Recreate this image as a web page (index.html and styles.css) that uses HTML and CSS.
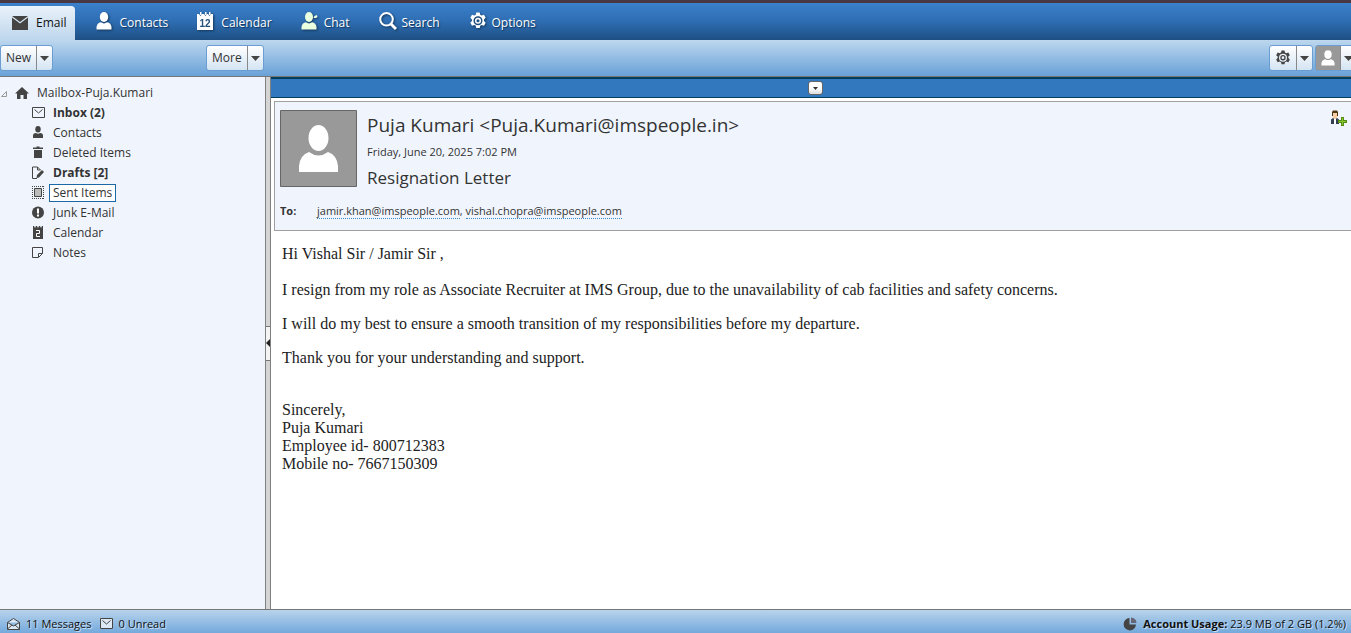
FILE: index.html
```html
<!DOCTYPE html>
<html lang="en">
<head>
<meta charset="utf-8">
<title>Mailbox - Resignation Letter</title>
<link rel="stylesheet" href="styles.css">
</head>
<body>
<svg class="sprite" aria-hidden="true">
  <symbol id="person" viewBox="0 0 16 18"><ellipse cx="8" cy="5" rx="4.2" ry="5"/><path d="M0.500 17.500V15Q1 11 5 10.300Q8 12.500 11 10.300Q15 11 15.500 15V17.500Z"/></symbol>
  <symbol id="gear" viewBox="0 0 18 18"><path fill-rule="evenodd" d="M7.300 0.500h3.400l.5 2.300 1.500.8 2.300-.8 1.700 3-1.700 1.600v1.700l1.700 1.600-1.700 3-2.300-.8-1.500.8-.5 2.300H7.300l-.5-2.300-1.500-.8-2.300.8-1.700-3L3 9.100V7.400L1.300 5.800l1.700-3 2.300.8 1.500-.8ZM9 4.200a4.500 4.500 0 1 0 0 9a4.500 4.500 0 1 0 0-9Z"/><circle cx="9" cy="8.700" r="2.300" fill="none" stroke="currentColor" stroke-width="1.500"/></symbol>
  <symbol id="caret" viewBox="0 0 9 5"><path d="M0 0H9L4.500 5Z"/></symbol>
  <symbol id="letter" viewBox="0 0 13 11"><path fill="none" stroke="currentColor" d="M.5.5h12v10H.5ZM2.500 2.500l4 3.500 4-3.500"/></symbol>
</svg>

<header>
  <nav class="tabs">
    <button class="tab active"><svg class="icon" viewBox="0 0 16 14"><path d="M0 0H16L8 6Z M0 1.500L8 7.500L16 1.500V14H0Z"/></svg>Email</button>
    <button class="tab"><svg class="icon"><use href="#person"/></svg>Contacts</button>
    <button class="tab"><svg class="icon" viewBox="0 0 16 18"><path d="M0 2h2l1.500 2L5 2h2l1.500 2L10 2h1l1.500 2L14 2h2v16H0Z"/><path d="M3 0h1.500v3H3zM8 0h1.500v3H8zM12 0h1.500v3H12z"/><text class="day" x="8" y="15" text-anchor="middle">12</text></svg>Calendar</button>
    <button class="tab chat"><svg class="icon" viewBox="0 0 17 18"><ellipse cx="8" cy="5" rx="4" ry="5"/><path d="M0.500 17.500V15Q1 11 5 10.300Q8 12.500 11 10.300Q15 11 15.500 15V17.500ZM12.500 5.500l1-1.500 2.500-1 .5 2-1.500 1-2 0Z"/></svg>Chat</button>
    <button class="tab"><svg class="icon wide" viewBox="0 0 18 18"><circle cx="7.500" cy="7.300" r="6.300" fill="none" stroke="currentColor" stroke-width="2"/><path d="M12 12l5 5" stroke="currentColor" stroke-width="3"/></svg>Search</button>
    <button class="tab"><svg class="icon wide"><use href="#gear"/></svg>Options</button>
  </nav>
  <div class="toolbar">
    <div class="split new"><button>New</button><button aria-label="New menu"><svg class="caret"><use href="#caret"/></svg></button></div>
    <div class="split"><button>More</button><button aria-label="More menu"><svg class="caret"><use href="#caret"/></svg></button></div>
    <div class="split settings"><button aria-label="Settings"><svg class="cog"><use href="#gear"/></svg></button><button aria-label="Settings menu"><svg class="caret"><use href="#caret"/></svg></button></div>
    <div class="split account"><button aria-label="Account"><svg class="user"><use href="#person"/></svg></button><button aria-label="Account menu"><svg class="caret"><use href="#caret"/></svg></button></div>
  </div>
</header>

<main>
  <aside>
    <a class="folder root" href="#"><svg class="twisty" viewBox="0 0 7 7"><path d="M.5 6.500h5v-5Z" fill="none" stroke="#999"/></svg><svg class="home" viewBox="0 0 14 12"><path d="M7 0L14 6.500H12V12H8.500V8H5.500V12H2V6.500H0Z"/></svg><span>Mailbox-Puja.Kumari</span></a>
    <a class="folder unread" href="#"><svg class="glyph letter"><use href="#letter"/></svg><span>Inbox (2)</span></a>
    <a class="folder" href="#"><svg class="glyph" viewBox="0 0 12 13"><ellipse cx="6" cy="3.300" rx="2.700" ry="3.300"/><path d="M1 12V9.500Q1 7 4 7Q6 8.500 8 7Q11 7 11 9.500V12Z"/></svg><span>Contacts</span></a>
    <a class="folder" href="#"><svg class="glyph" viewBox="0 0 12 13"><path d="M1 1.500h3.500V.5h3v1H11V3H1ZM2 4h8v8H2Z"/></svg><span>Deleted Items</span></a>
    <a class="folder unread" href="#"><svg class="glyph" viewBox="0 0 12 13"><path d="M5 12.500H.5V1h5l3 3M5.500 1v3h3" fill="none" stroke="currentColor"/><path d="M4.500 12l.5-3L10 4l2 2L7 11.500Z"/></svg><span>Drafts [2]</span></a>
    <a class="folder selected" href="#"><svg class="glyph" viewBox="0 0 12 13"><path d="M0 .5h12M0 12.500h12M.5 0v13M11.500 0v13" stroke="currentColor" stroke-dasharray="1 1"/><path d="M2.500 2.500h7v8h-7Z" fill="#bbb" stroke="currentColor"/></svg><span>Sent Items</span></a>
    <a class="folder" href="#"><svg class="glyph" viewBox="0 0 12 13"><circle cx="6" cy="6.500" r="6"/><path d="M5 2.500h2v5H5ZM5 8.500h2v2H5Z" fill="#fff"/></svg><span>Junk E-Mail</span></a>
    <a class="folder" href="#"><svg class="glyph" viewBox="0 0 12 13"><path d="M1 0h1l1 2 1-2h1l1 2 1-2h1l1 2 1-2h1v13H1Z"/><path d="M4 4.500h3.500v3h-3v3H8" fill="none" stroke="#fff"/></svg><span>Calendar</span></a>
    <a class="folder" href="#"><svg class="glyph" viewBox="0 0 12 13"><path d="M.5 1.500h10v6l-4 4h-6ZM6.500 11v-3.500h4" fill="none" stroke="currentColor"/></svg><span>Notes</span></a>
  </aside>
  <div class="splitter"><button aria-label="Collapse folders"><svg viewBox="0 0 4 8"><path d="M4 0V8L0 4Z"/></svg></button></div>
  <section class="reader">
    <div class="handle"><button aria-label="Toggle header"><svg viewBox="0 0 5 3"><path d="M0 0H5L2.500 3Z"/></svg></button></div>
    <div class="headers">
      <div class="from">
        <svg class="photo" viewBox="0 0 77 77"><path fill="#999" stroke="#666" d="M.5.5h76v76H.5Z"/><path fill="#fff" d="M19 62V56Q20 45 29 42Q38.500 49 48 42Q57 45 58 56V62Z"/><ellipse cx="38.500" cy="28" rx="11" ry="14" fill="#fff" stroke="#999" stroke-width="2"/></svg>
        <div class="who">
          <h1>Puja Kumari &lt;Puja.Kumari@imspeople.in&gt;</h1>
          <time datetime="2025-06-20T19:02">Friday, June 20, 2025 7:02 PM</time>
          <h2>Resignation Letter</h2>
        </div>
        <button class="add" aria-label="Add contact"><svg viewBox="0 0 17 16"><path d="M1 14V9.500L3 8h4l2 1.500V14Z" fill="#344052"/><path d="M4 8h2v6H4Z" fill="#fff"/><path d="M2.500 2h5v5l-1.500 2H4L2.500 7Z" fill="#f6cda4"/><path d="M2 6V2l1-1.500h4L8 2v4H7V3H3v3Z" fill="#543915"/><path d="M11 7h3v3h3v3h-3v3h-3v-3H8v-3h3Z" fill="#568c16"/><path d="M12 8h1v3h3v1h-3v3h-1v-3H9v-1h3Z" fill="#83c62e"/></svg></button>
      </div>
      <div class="to"><b>To:</b><span><a href="#">jamir.khan@imspeople.com</a>, <a href="#">vishal.chopra@imspeople.com</a></span></div>
    </div>
    <article>
      <p class="hello">Hi Vishal Sir / Jamir Sir ,</p>
      <p>I resign from my role as Associate Recruiter at IMS Group, due to the unavailability of cab facilities and safety concerns.</p>
      <p>I will do my best to ensure a smooth transition of my responsibilities before my departure.</p>
      <p>Thank you for your understanding and support.</p>
      <p class="sign">Sincerely,<br>Puja Kumari<br>Employee id- 800712383<br>Mobile no- 7667150309</p>
    </article>
  </section>
</main>

<footer>
  <svg class="mail" viewBox="0 0 13 12"><path d="M.5 4.500L6.500.5l6 4v7H.5ZM.5 4.500l6 3.500 6-3.500M.5 11L5 7M12.500 11L8 7" fill="#dce8f3" stroke="currentColor"/></svg><span>11 Messages</span>
  <svg class="letter unreadcount"><use href="#letter"/></svg><span>0 Unread</span>
  <svg class="pie" viewBox="0 0 14 14"><path d="M6.500 7.500V1A6.200 6.200 0 1 0 13 7.500Z"/><path d="M8 .5V6h5.500A5.500 5.500 0 0 0 8 .5Z" fill="#667"/></svg><span><b>Account Usage:</b> 23.9 MB of 2 GB (1.2%)</span>
</footer>
</body>
</html>
```
FILE: styles.css
```css
* { box-sizing: border-box; }
body { margin: 0; height: 100vh; display: flex; flex-direction: column; border-top: 3px solid #4a3744; background: #fff; color: #333; font: 12px/20px "Open Sans", "Noto Sans", sans-serif; overflow: hidden; }
button { margin: 0; padding: 0; border: 0; background: none; color: inherit; font: inherit; }
a { color: inherit; text-decoration: none; }
svg { display: block; flex: none; fill: currentColor; }
h1, h2, p { margin: 0; font-weight: 400; }
.sprite { position: absolute; width: 0; height: 0; }
.tabs { display: flex; height: 37px; padding-top: 3px; background: linear-gradient(#3b80cb, #2e6db2 50%, #1e4f83); }
.tab { display: flex; align-items: center; gap: 8px; padding: 0 8px 0 21px; color: #fff; text-shadow: 1px 1px 1px #12365b; }
.tab.active { padding: 0 8px 0 12px; border-radius: 0 4px 0 0; background: linear-gradient(#eaf2fa, #bdd6ec); color: #111; text-shadow: none; }
.icon { width: 16px; height: 18px; margin-bottom: 4px; filter: drop-shadow(1px 1px 1px #12365b); }
.icon.wide { width: 18px; margin-right: -3px; }
.active .icon { color: #444; filter: none; height: 14px; margin-bottom: 1px; }
.chat .icon { width: 17px; margin-right: -2px; color: #eaffdf; }
.day { font: bold 10px "Liberation Sans", sans-serif; fill: #23517f; text-shadow: none; }
.toolbar { display: flex; height: 37px; padding-top: 5px; background: linear-gradient(#bdd7ee, #69a1d8); border-bottom: 1px solid #777; }
.split { display: flex; height: 26px; border: 1px solid #6a9ed2; border-radius: 3px; background: linear-gradient(#fff, #d4e4f3); }
.split button { display: grid; place-items: center; }
.split button:first-child { padding: 0 5px; }
.split button:last-child { width: 16px; border-left: 1px solid #888; }
.caret { width: 9px; height: 5px; color: #444; }
.new { margin-right: 153px; }
.settings { margin-left: auto; }
.cog { width: 16px; height: 16px; color: #444; }
.account { margin-left: 2px; margin-right: -6px; }
.account button:first-child { background: #999; color: #fff; }
.user { width: 14px; height: 16px; }
main { display: flex; flex: 1; min-height: 0; }
aside { width: 265px; flex: none; padding-top: 6px; background: #f0f5fd; }
.folder { display: flex; align-items: center; height: 20px; padding-left: 32px; gap: 5px; }
.folder span { padding: 0 3px; border: 1px solid transparent; line-height: 16px; }
.folder.root { padding-left: 1px; gap: 7px; }
.folder.root span { padding: 0; }
.twisty { width: 7px; height: 7px; }
.home { width: 14px; height: 12px; color: #444; }
.glyph { width: 12px; height: 13px; margin-bottom: 2px; color: #444; }
.letter { width: 13px; height: 11px; }
.folder .letter { margin-right: -1px; }
.unread { font-weight: 700; }
.folder.selected span { border-color: #1b68a4; background: #fff; }
.splitter { display: flex; align-items: center; width: 6px; flex: none; border: solid #808080; border-width: 0 1px; background: #d4d4d4; }
.splitter button { display: grid; place-items: center; width: 4px; height: 35px; border: solid #777; border-width: 1px 0; background: #f4f4f4; }
.splitter svg { width: 4px; height: 8px; color: #222; }
.reader { flex: 1; min-width: 0; }
.handle { display: grid; place-items: center; height: 21px; margin-bottom: 3px; border-top: 2px solid #003e5e; border-bottom: 1px solid #003e5e; background: #3278be; }
.handle button { display: grid; place-items: center; width: 15px; height: 14px; margin-left: 9px; border: 1px solid #666; border-radius: 3px; background: linear-gradient(#fff 50%, #ddd); }
.handle svg { width: 5px; height: 3px; }
.headers { margin-left: 3px; padding: 8px 4px 8px 5px; border: 1px solid #a0a0a0; border-right: 0; background: #f0f5fd; }
.from { display: flex; gap: 10px; }
.photo { width: 77px; height: 77px; }
.who { flex: 1; }
h1 { font-size: 19px; line-height: 30px; }
time { display: block; font-size: 11px; line-height: 24px; }
h2 { font-size: 17px; line-height: 28px; }
.add { align-self: flex-start; }
.add svg { width: 17px; height: 16px; }
.to { display: flex; margin-top: 11px; line-height: 16px; padding: 0 0 3px; font-size: 11px; }
.to b { width: 37px; }
.to a { border-bottom: 1px dotted #3989c9; }
article { padding: 14px 11px; color: #222; font: 16px/18px "Liberation Serif", serif; }
article p { margin-bottom: 16px; }
article .hello { margin-bottom: 18px; }
article .sign { margin-top: 34px; }
footer { display: flex; align-items: center; flex: none; height: 24px; padding: 4px 5px 0 7px; border-top: 1px solid #777; background: linear-gradient(#b8d3eb, #74a9dc); color: #111; font-size: 11px; text-shadow: 1px 1px 0 #c9dff3; }
footer svg { margin-right: 6px; color: #444; }
.mail { width: 13px; height: 12px; }
.unreadcount { margin-left: 8px; background: #dce8f3; }
.pie { width: 14px; height: 14px; margin-left: auto; }
```
